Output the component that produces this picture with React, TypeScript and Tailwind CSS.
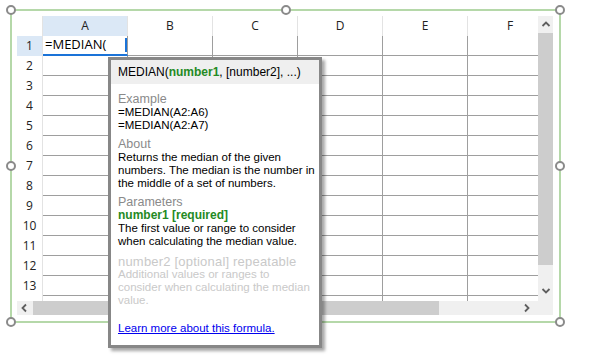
import React from 'react';

const cols = ['A', 'B', 'C', 'D', 'E', 'F'];
const rows = Array.from({ length: 14 }, (_, i) => i + 1);

const handles = [
  'left-[6px] top-[5px]',
  'left-[281px] top-[5px]',
  'left-[555px] top-[5px]',
  'left-[6px] top-[161px]',
  'left-[555px] top-[161px]',
  'left-[6px] top-[317px]',
  'left-[281px] top-[317px]',
  'left-[555px] top-[317px]',
];

function Chevron({ dir }: { dir: 'up' | 'down' | 'left' | 'right' }) {
  const d = {
    up: 'M1.5 6 L5 2.5 L8.5 6',
    down: 'M1.5 3 L5 6.5 L8.5 3',
    left: 'M6 1.5 L2.5 5 L6 8.5',
    right: 'M3 1.5 L6.5 5 L3 8.5',
  }[dir];
  return (
    <svg width="10" height="10" viewBox="0 0 10 10">
      <path d={d} fill="none" stroke="#5f5f5f" strokeWidth="1.8" />
    </svg>
  );
}

function Grid() {
  return (
    <div className="flex h-[299px] w-[536px] bg-[#f0f0f0]">
      <div className="flex w-[521px] flex-col">
        <div className="h-[285px] overflow-hidden bg-white">
          <div className="flex h-[20px]">
            <div className="w-[26px] shrink-0 border-r border-[#e3e3e3]" />
            {cols.map((c, i) => (
              <div
                key={c}
                className={`flex w-[85px] shrink-0 items-center justify-center border-r border-[#e3e3e3] text-[12px] text-[#222] ${i === 0 ? 'bg-[#dbe8f6]' : ''}`}
              >
                {c}
              </div>
            ))}
          </div>
          {rows.map((r) => (
            <div key={r} className="flex h-[20px]">
              <div
                className={`flex w-[26px] shrink-0 items-center justify-center border-r border-[#e3e3e3] text-[12px] text-[#222] ${r === 1 ? 'bg-[#dbe8f6]' : ''}`}
              >
                {r < 14 ? r : null}
              </div>
              {cols.map((c, i) =>
                r === 1 && i === 0 ? (
                  <div
                    key={c}
                    className="relative flex w-[85px] shrink-0 items-center border-b-2 border-r border-b-[#1a73d8] border-r-[#9e9e9e] pl-[2px] text-[13px] text-black"
                  >
                    =MEDIAN(
                    <div className="absolute right-0 top-[2px] h-[14px] w-[2px] bg-[#1a73d8]" />
                  </div>
                ) : (
                  <div key={c} className="w-[85px] shrink-0 border-b border-r border-[#9e9e9e]" />
                ),
              )}
            </div>
          ))}
        </div>
        <div className="flex h-[14px] items-center">
          <div className="flex w-[16px] justify-center">
            <Chevron dir="left" />
          </div>
          <div className="h-[14px] w-[406px] bg-[#cdcdcd]" />
          <div className="flex flex-1 justify-end pr-[6px]">
            <Chevron dir="right" />
          </div>
        </div>
      </div>
      <div className="flex w-[15px] flex-col">
        <div className="flex h-[17px] items-center justify-center">
          <Chevron dir="up" />
        </div>
        <div className="h-[232px] bg-[#cdcdcd]" />
        <div className="flex h-[36px] items-end justify-center pb-[5px]">
          <Chevron dir="down" />
        </div>
      </div>
    </div>
  );
}

function Tooltip() {
  return (
    <div
      className="absolute left-[108px] top-[57px] h-[291px] w-[214px] border-[3px] border-[#878787] bg-white shadow-[3px_3px_3px_rgba(0,0,0,0.35)]"
      style={{ fontFamily: '"Liberation Sans", Arial, sans-serif' }}
    >
      <div className="flex h-[24px] items-center bg-[#efefef] pl-[7px] text-[12px] text-black">
        MEDIAN(<span className="font-bold text-[#248a24]">number1</span>, [number2], ...)
      </div>
      <div className="whitespace-nowrap pl-[7px] pt-[9px] text-[11.5px] leading-[13px] text-black">
        <div className="text-[12.5px] text-[#8a8a8a]">Example</div>
        <div>=MEDIAN(A2:A6)</div>
        <div>=MEDIAN(A2:A7)</div>
        <div className="mt-[6px] text-[12.5px] text-[#8a8a8a]">About</div>
        <div>
          Returns the median of the given
          <br />
          numbers. The median is the number in
          <br />
          the middle of a set of numbers.
        </div>
        <div className="mt-[6px] text-[12.5px] text-[#8a8a8a]">Parameters</div>
        <div className="text-[12px] font-bold text-[#248a24]">number1 [required]</div>
        <div>
          The first value or range to consider
          <br />
          when calculating the median value.
        </div>
        <div className="mt-[7px] text-[13px] tracking-[0.2px] text-[#c9c9c9]">number2 [optional] repeatable</div>
        <div className="text-[#c9c9c9]">
          Additional values or ranges to
          <br />
          consider when calculating the median
          <br />
          value.
        </div>
        <div className="mt-[15px]">
          <a className="text-[#0000ee] underline">Learn more about this formula.</a>
        </div>
      </div>
    </div>
  );
}

export default function App() {
  return (
    <div
      className="relative h-[359px] w-[597px] overflow-hidden bg-white pl-[10px] pt-[9px]"
      style={{ fontFamily: '"Open Sans", "Liberation Sans", sans-serif' }}
    >
      <div className="h-[314px] w-[551px] border-2 border-[#b5d8a9] pl-[5px] pt-[5px]">
        <Grid />
      </div>
      {handles.map((h) => (
        <div key={h} className={`absolute ${h} h-[10px] w-[10px] rounded-full border-2 border-[#8a8a8a] bg-white`} />
      ))}
      <Tooltip />
    </div>
  );
}
